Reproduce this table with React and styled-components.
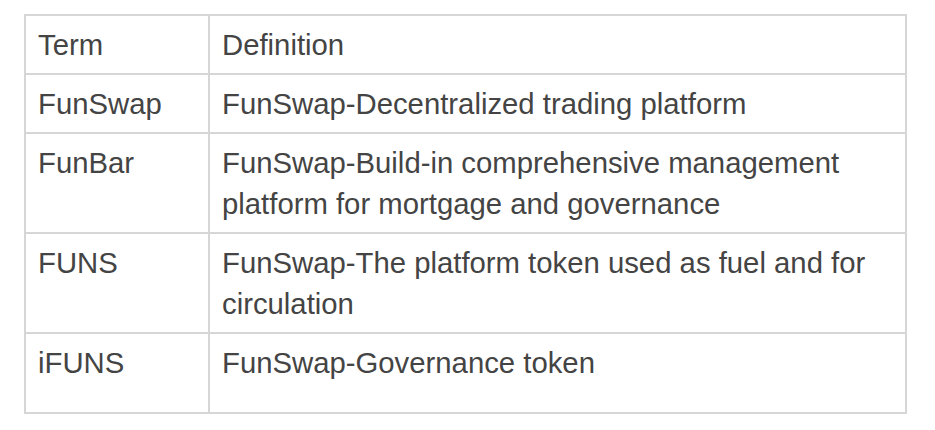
import React from "react";
import styled, { createGlobalStyle } from "styled-components";

const Global = createGlobalStyle`
  html, body { margin: 0; padding: 0; background: #ffffff; }
  body { font-family: "Liberation Sans", Arial, sans-serif; }
`;

const Wrap = styled.div`
  padding: 14px 28px 0 24px;
`;

const Table = styled.table`
  width: 883px;
  border-collapse: collapse;
  border: 2px solid #d6d6d6;
  color: #444444;
  font-size: 29.3px;
  line-height: 41px;
`;

const Row = styled.tr`
  height: ${(p) => (p.$tall ? "80px" : "auto")};
`;

const Cell = styled.td`
  border: 2px solid #d6d6d6;
  padding: 8px 12px 8px 12px;
  vertical-align: top;
  text-align: left;
  font-weight: normal;
  width: ${(p) => p.$w || "auto"};
`;

const rows = [
  ["FunSwap", "FunSwap-Decentralized trading platform"],
  ["FunBar", "FunSwap-Build-in comprehensive management platform for mortgage and governance"],
  ["FUNS", "FunSwap-The platform token used as fuel and for circulation"],
  ["iFUNS", "FunSwap-Governance token", true],
];

export default function App() {
  return (
    <Wrap>
      <Global />
      <Table>
        <tbody>
          <Row>
            <Cell $w="158px">Term</Cell>
            <Cell>Definition</Cell>
          </Row>
          {rows.map(([t, d, tall]) => (
            <Row key={t} $tall={tall}>
              <Cell>{t}</Cell>
              <Cell>{d}</Cell>
            </Row>
          ))}
        </tbody>
      </Table>
    </Wrap>
  );
}
